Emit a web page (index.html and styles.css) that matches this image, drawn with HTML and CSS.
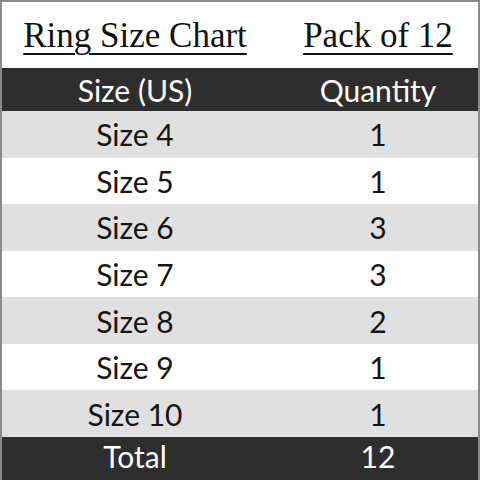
FILE: index.html
```html
<!DOCTYPE html>
<html>
<head>
<meta charset="utf-8">
<link rel="stylesheet" href="styles.css">
</head>
<body>
<div class="chart">
  <div class="title l"><span>Ring Size Chart</span></div>
  <div class="title r"><span>Pack of 12</span></div>

  <div class="cell head l">Size (US)</div>
  <div class="cell head r">Quantity</div>

  <div class="cell alt l">Size 4</div><div class="cell alt r">1</div>
  <div class="cell l">Size 5</div><div class="cell r">1</div>
  <div class="cell alt l">Size 6</div><div class="cell alt r">3</div>
  <div class="cell l">Size 7</div><div class="cell r">3</div>
  <div class="cell alt l">Size 8</div><div class="cell alt r">2</div>
  <div class="cell l">Size 9</div><div class="cell r">1</div>
  <div class="cell alt l">Size 10</div><div class="cell alt r">1</div>

  <div class="cell head total l">Total</div>
  <div class="cell head total r">12</div>
</div>
</body>
</html>
```
FILE: styles.css
```css
* { box-sizing: border-box; }
html, body { margin: 0; padding: 0; background: #fff; }
.chart {
  width: 480px;
  height: 480px;
  border: 2px solid #8a8a8a;
  border-bottom-width: 0;
  display: grid;
  grid-template-columns: 268px 1fr;
  grid-template-rows: 66px 43px repeat(7, 1fr) 43px;
  background: #fff;
}
.l { padding-right: 2px; }
.r { padding-left: 8px; }
.title {
  display: flex;
  justify-content: center;
  align-items: flex-start;
  padding-top: 15px;
  font-family: "Liberation Serif", "Times New Roman", serif;
  font-size: 35px;
  line-height: 38px;
  color: #111;
}
.title span {
  text-decoration: underline;
  text-decoration-thickness: 2px;
  text-underline-offset: 6px;
}
.cell {
  display: flex;
  align-items: center;
  justify-content: center;
  font-family: Lato, "Open Sans", sans-serif;
  font-size: 30px;
  color: #151515;
  background: #fff;
}
.cell.alt { background: #e0e0e0; }
.cell.head {
  background: #2e2e2e;
  color: #fff;
}
.cell.total { padding-bottom: 5px; }
```
